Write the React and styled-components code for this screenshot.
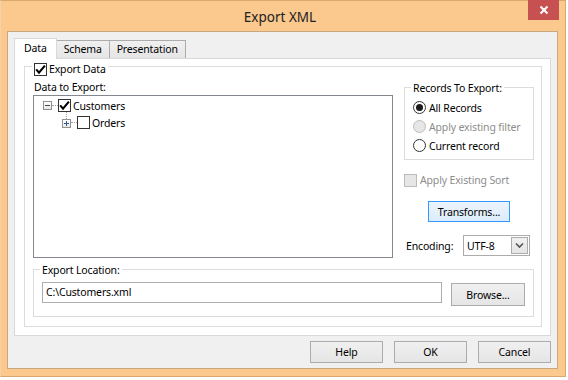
import React from "react";
import styled, { createGlobalStyle } from "styled-components";

const GlobalStyle = createGlobalStyle`
  html, body { margin: 0; padding: 0; background: #fff; }
  body {
    font-family: "Noto Sans", "Segoe UI", sans-serif;
    font-size: 10.5px;
    letter-spacing: -0.15px;
    line-height: 16px;
    color: #000;
  }
  * { box-sizing: border-box; }
`;

const Desktop = styled.div`
  width: 568px;
  height: 380px;
  overflow: hidden;
  background: #fff;
`;

const Window = styled.div`
  width: 566px;
  height: 377px;
  background: #fbc88e;
  border: 1px solid #d9a86f;
  border-left-color: #f5d3a8;
  padding: 0 7px 7px 6px;
  display: flex;
  flex-direction: column;
`;

const TitleBar = styled.div`
  height: 30px;
  margin: 0 -7px 0 -6px;
  padding-right: 6px;
  display: grid;
  grid-template-columns: 1fr auto 1fr;
  align-items: center;
`;

const Title = styled.div`
  grid-column: 2;
  font-size: 13.5px;
  letter-spacing: 0;
  color: #222;
  padding-top: 1px;
`;

const CloseButton = styled.button`
  grid-column: 3;
  justify-self: end;
  align-self: start;
  width: 31px;
  height: 20px;
  margin-top: -1px;
  border: none;
  background: #c75050;
  display: flex;
  align-items: center;
  justify-content: center;
  padding: 0;
`;

const Client = styled.div`
  flex: 1;
  background: #f0f0f0;
  border: 1px solid #c9a87f;
  padding: 6px 6px 0 6px;
  display: flex;
  flex-direction: column;
`;

const TabStrip = styled.div`
  display: flex;
  align-items: flex-end;
  height: 20px;
  position: relative;
  z-index: 1;
`;

const Tab = styled.div`
  height: ${(p) => (p.$active ? "21px" : "18px")};
  padding: ${(p) => (p.$active ? "0 9px" : "0 7px 0 7px")};
  margin-left: ${(p) => (p.$first ? "0" : "-1px")};
  margin-bottom: ${(p) => (p.$active ? "-1px" : "0")};
  border: 1px solid ${(p) => (p.$active ? "#d9d9d9" : "#acacac")};
  border-bottom: none;
  background: ${(p) =>
    p.$active ? "#fff" : "linear-gradient(#f0f0f0, #e5e5e5)"};
  line-height: ${(p) => (p.$active ? "18px" : "16px")};
  position: relative;
  z-index: ${(p) => (p.$active ? 2 : 1)};
`;

const TabPanel = styled.div`
  background: #fff;
  border: 1px solid #d9d9d9;
  padding: 7px 8px 8px 9px;
`;

const GroupBox = styled.div`
  border: 1px solid #dcdcdc;
  margin-top: ${(p) => p.$top || 0}px;
  padding: 0 ${(p) => p.$pr ?? 8}px ${(p) => p.$pb ?? 9}px
    ${(p) => p.$pl ?? 8}px;
  display: flex;
  flex-direction: column;
`;

const Legend = styled.div`
  align-self: flex-start;
  display: flex;
  align-items: center;
  gap: 2px;
  height: ${(p) => p.$h || 16}px;
  margin-top: -${(p) => p.$lift || 8}px;
  margin-left: ${(p) => p.$ml ?? -2}px;
  padding: 0 2px;
  background: #fff;
  color: #000;
`;

const Body = styled.div`
  display: flex;
  gap: 11px;
  margin-top: 3px;
`;

const LeftColumn = styled.div`
  width: 360px;
  display: flex;
  flex-direction: column;
`;

const Label = styled.div`
  padding-left: 1px;
  height: 16px;
  color: ${(p) => (p.$disabled ? "#8d8d8d" : "#000")};
  white-space: nowrap;
`;

const TreeBox = styled.div`
  height: 163px;
  border: 1px solid #828790;
  background: #fff;
  padding: 1px 0 0 9px;
`;

const TreeRow = styled.div`
  display: flex;
  align-items: center;
  height: 17px;
  padding-left: ${(p) => (p.$level || 0) * 19}px;
`;

const Expander = styled.span`
  width: 9px;
  height: 9px;
  flex: none;
  border: 1px solid #919191;
  background: linear-gradient(#fff, #e8e8e8);
  display: flex;
  align-items: center;
  justify-content: center;
  position: relative;
  margin-top: ${(p) => (p.$stem ? "1px" : "0")};

  &::before {
    content: "";
    display: ${(p) => (p.$stem ? "block" : "none")};
    position: absolute;
    left: 3px;
    top: -8px;
    height: 7px;
    border-left: 1px dotted #a0a0a0;
  }
`;

const Dots = styled.span`
  width: 6px;
  flex: none;
  border-top: 1px dotted #a0a0a0;
`;

const Box = styled.span`
  width: 13px;
  height: 13px;
  flex: none;
  border: 1px solid ${(p) => (p.$disabled ? "#bcbcbc" : "#333")};
  background: ${(p) => (p.$disabled ? "#e6e6e6" : "#fff")};
  display: flex;
  align-items: center;
  justify-content: center;
`;

const TreeText = styled.span`
  margin-left: 2px;
`;

const RightColumn = styled.div`
  width: 130px;
  display: flex;
  flex-direction: column;
`;

const RadioList = styled.div`
  margin-top: 2px;
  display: flex;
  flex-direction: column;
`;

const OptionRow = styled.label`
  display: flex;
  align-items: center;
  gap: 3px;
  height: ${(p) => p.$h || 19}px;
  margin-top: ${(p) => p.$top || 0}px;
  color: ${(p) => (p.$disabled ? "#8d8d8d" : "#000")};
  white-space: nowrap;
`;

const RadioCircle = styled.span`
  width: 13px;
  height: 13px;
  flex: none;
  border-radius: 50%;
  border: 1px solid ${(p) => (p.$disabled ? "#bcbcbc" : "#333")};
  background: ${(p) => (p.$disabled ? "#e6e6e6" : "#fff")};
  display: flex;
  align-items: center;
  justify-content: center;

  &::after {
    content: "";
    display: ${(p) => (p.$checked ? "block" : "none")};
    width: 7px;
    height: 7px;
    border-radius: 50%;
    background: #1a1a1a;
  }
`;

const Button = styled.button`
  font: inherit;
  letter-spacing: inherit;
  color: #000;
  width: ${(p) => p.$w || 73}px;
  height: ${(p) => p.$h || 22}px;
  padding: 0;
  border: 1px solid ${(p) => (p.$default ? "#3399ff" : "#acacac")};
  background: ${(p) =>
    p.$default
      ? "linear-gradient(#ecf4fc, #dcecfc)"
      : "linear-gradient(#f0f0f0, #e5e5e5)"};
  margin-top: ${(p) => p.$top || 0}px;
  align-self: ${(p) => p.$align || "auto"};
`;

const EncodingRow = styled.div`
  margin-top: 13px;
  display: flex;
  align-items: center;
  justify-content: space-between;
  padding: 0 4px 0 2px;
`;

const Select = styled.div`
  width: 67px;
  height: 21px;
  border: 1px solid #acacac;
  background: #fff;
  display: flex;
  align-items: center;
  justify-content: space-between;
  padding: 1px 1px 1px 3px;
`;

const SelectArrow = styled.span`
  width: 17px;
  height: 17px;
  border: 1px solid #acacac;
  background: linear-gradient(#f0f0f0, #e5e5e5);
  display: flex;
  align-items: center;
  justify-content: center;
`;

const LocationRow = styled.div`
  margin-top: 4px;
  display: flex;
  align-items: flex-start;
  gap: 9px;
`;

const TextBox = styled.div`
  width: 400px;
  height: 21px;
  border: 1px solid #abadb3;
  background: #fff;
  padding: 1px 3px;
  line-height: 17px;
`;

const Footer = styled.div`
  display: flex;
  justify-content: flex-end;
  gap: 11px;
  margin-top: 5px;
`;

const Check = () => (
  <svg width="11" height="11" viewBox="0 0 11 11">
    <path d="M1.2 5.4 L4 8.6 L9.9 1.6" fill="none" stroke="#000" strokeWidth="2.1" />
  </svg>
);

const Minus = () => (
  <svg width="7" height="7" viewBox="0 0 7 7">
    <path d="M1 3.5 H6" stroke="#4a4a4a" strokeWidth="1" />
  </svg>
);

const Plus = () => (
  <svg width="7" height="7" viewBox="0 0 7 7">
    <path d="M1 3.5 H6 M3.5 1 V6" stroke="#2f5a9a" strokeWidth="1" />
  </svg>
);

const Chevron = () => (
  <svg width="9" height="7" viewBox="0 0 9 7">
    <path d="M1 1.5 L4.5 5 L8 1.5" fill="none" stroke="#555" strokeWidth="1.6" />
  </svg>
);

const CloseGlyph = () => (
  <svg width="10" height="10" viewBox="0 0 10 10">
    <path d="M1.5 1.5 L8.5 8.5 M8.5 1.5 L1.5 8.5" stroke="#fff" strokeWidth="2" />
  </svg>
);

export default function App() {
  return (
    <Desktop>
      <GlobalStyle />
      <Window>
        <TitleBar>
          <Title>Export XML</Title>
          <CloseButton>
            <CloseGlyph />
          </CloseButton>
        </TitleBar>
        <Client>
          <TabStrip>
            <Tab $active $first>Data</Tab>
            <Tab>Schema</Tab>
            <Tab>Presentation</Tab>
          </TabStrip>
          <TabPanel>
            <GroupBox $top={0} $pr={7}>
              <Legend $h={14} $lift={5} $ml={-1}>
                <Box>
                  <Check />
                </Box>
                <span>Export Data</span>
              </Legend>
              <Body>
                <LeftColumn>
                  <Label>Data to Export:</Label>
                  <TreeBox>
                    <TreeRow>
                      <Expander>
                        <Minus />
                      </Expander>
                      <Dots />
                      <Box>
                        <Check />
                      </Box>
                      <TreeText>Customers</TreeText>
                    </TreeRow>
                    <TreeRow $level={1}>
                      <Expander $stem>
                        <Plus />
                      </Expander>
                      <Dots />
                      <Box />
                      <TreeText>Orders</TreeText>
                    </TreeRow>
                  </TreeBox>
                </LeftColumn>
                <RightColumn>
                  <GroupBox $top={8} $pb={4}>
                    <Legend>Records To Export:</Legend>
                    <RadioList>
                      <OptionRow>
                        <RadioCircle $checked />
                        All Records
                      </OptionRow>
                      <OptionRow $disabled>
                        <RadioCircle $disabled />
                        Apply existing filter
                      </OptionRow>
                      <OptionRow>
                        <RadioCircle />
                        Current record
                      </OptionRow>
                    </RadioList>
                  </GroupBox>
                  <OptionRow $h={16} $top={12} $disabled>
                    <Box $disabled />
                    Apply Existing Sort
                  </OptionRow>
                  <Button $default $w={82} $h={21} $top={13} $align="center">
                    Transforms...
                  </Button>
                  <EncodingRow>
                    <span>Encoding:</span>
                    <Select>
                      <span>UTF-8</span>
                      <SelectArrow>
                        <Chevron />
                      </SelectArrow>
                    </Select>
                  </EncodingRow>
                </RightColumn>
              </Body>
              <GroupBox $top={11} $pb={10}>
                <Legend>Export Location:</Legend>
                <LocationRow>
                  <TextBox>C:\Customers.xml</TextBox>
                  <Button $w={74} $h={23} $top={1}>
                    Browse...
                  </Button>
                </LocationRow>
              </GroupBox>
            </GroupBox>
          </TabPanel>
          <Footer>
            <Button>Help</Button>
            <Button>OK</Button>
            <Button>Cancel</Button>
          </Footer>
        </Client>
      </Window>
    </Desktop>
  );
}
